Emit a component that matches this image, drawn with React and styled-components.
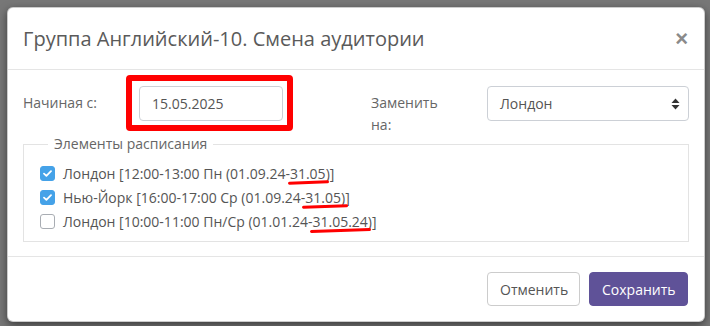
import React from "react";
import styled, { createGlobalStyle } from "styled-components";

const Global = createGlobalStyle`
  html, body { margin: 0; padding: 0; }
  body {
    background: #777777;
    font-family: "Open Sans", "Liberation Sans", sans-serif;
    font-size: 14px;
    color: #555;
    width: 710px;
    height: 326px;
    overflow: hidden;
  }
  * { box-sizing: border-box; }
`;

const Page = styled.div`
  padding: 7px 5px 0 7px;
`;

const Modal = styled.div`
  width: 698px;
  height: 315px;
  background: #fff;
  border: 1px solid rgba(0, 0, 0, 0.2);
  border-radius: 6px;
  box-shadow: 0 3px 9px rgba(0, 0, 0, 0.5);
  display: flex;
  flex-direction: column;
`;

const Header = styled.div`
  flex: none;
  display: flex;
  align-items: center;
  justify-content: space-between;
  height: 62px;
  padding: 0 15px;
  border-bottom: 1px solid #e5e5e5;
`;

const Title = styled.h4`
  margin: 0;
  font-size: 20px;
  font-weight: 400;
  color: #5a5a5a;
  line-height: 28px;
  padding-top: 1px;
`;

const Close = styled.button`
  border: 0;
  background: none;
  padding: 0;
  margin-right: 1px;
  font-family: "Liberation Sans", sans-serif;
  font-size: 22px;
  font-weight: 700;
  color: #8a8a8a;
  line-height: 1;
  cursor: pointer;
`;

const Body = styled.div`
  flex: 1;
  min-height: 0;
  padding: 16px 15px 0;
  border-bottom: 1px solid #e5e5e5;
`;

const FormRow = styled.div`
  display: grid;
  grid-template-columns: 86px 144px 28px 86px 202px;
  column-gap: 30px;
  align-items: start;
`;

const Label = styled.label`
  grid-column: ${(p) => p.$col};
  padding-top: 6px;
  line-height: 22px;
  color: #666;
  font-size: 14px;
`;

const Field = styled.div`
  grid-column: ${(p) => p.$col};
  position: relative;
`;

const Input = styled.input`
  display: block;
  width: 100%;
  height: 35px;
  padding: 6px 12px;
  font: inherit;
  font-size: 14px;
  color: #555;
  border: 1px solid #ccd0d6;
  border-radius: 4px;
  background: #fff;
  outline: none;
`;

const Highlight = styled.div`
  position: absolute;
  left: -13px;
  top: -11px;
  right: -10px;
  bottom: -10px;
  border: 6px solid #ff0000;
  border-radius: 4px;
  pointer-events: none;
`;

const Select = styled.div`
  height: 35px;
  display: flex;
  align-items: center;
  justify-content: space-between;
  padding: 0 8px 0 12px;
  border: 1px solid #ccd0d6;
  border-radius: 4px;
  color: #555;
  background: #fff;
`;

const Fieldset = styled.fieldset`
  margin: 0;
  padding: 9px 16px 8px;
  border: 1px solid #e3e3e3;
  min-width: 0;
`;

const Legend = styled.legend`
  padding: 0 6px;
  margin-left: 8px;
  font-size: 14px;
  color: #666;
  line-height: 16px;
`;

const Item = styled.label`
  display: flex;
  align-items: center;
  gap: 8px;
  height: 24px;
  color: #555;
  font-size: 14px;
  white-space: nowrap;
`;

const Box = styled.span`
  width: 15px;
  height: 15px;
  border-radius: 3px;
  flex: none;
  display: flex;
  align-items: center;
  justify-content: center;
  background: ${(p) => (p.$checked ? "#45a2e8" : "#fff")};
  border: 1px solid ${(p) => (p.$checked ? "#45a2e8" : "#a9adb3")};
`;

const Mark = styled.span`
  position: relative;
  &::after {
    content: "";
    position: absolute;
    left: ${(p) => p.$l}px;
    right: ${(p) => p.$r}px;
    top: calc(100% + ${(p) => p.$dy}px);
    height: 3px;
    border-radius: 2px;
    background: #ff0000;
    transform: rotate(${(p) => p.$rot}deg);
  }
`;

const Footer = styled.div`
  flex: none;
  display: flex;
  justify-content: flex-end;
  gap: 9px;
  padding: 15px;
`;

const Button = styled.button`
  height: 34px;
  padding: 0 12px;
  font-family: "Open Sans", "Liberation Sans", sans-serif;
  font-size: 14px;
  border-radius: 4px;
  cursor: pointer;
  border: 1px solid ${(p) => (p.$primary ? "#5f5298" : "#ccc")};
  background: ${(p) => (p.$primary ? "#5f5298" : "#fff")};
  color: ${(p) => (p.$primary ? "#fff" : "#555")};
  width: ${(p) => p.$w}px;
  margin-right: ${(p) => p.$mr || 0}px;
`;

const Check = () => (
  <svg width="9" height="7" viewBox="0 0 9 7">
    <path d="M1 3.6 L3.4 5.8 L8 1.2" fill="none" stroke="#fff" strokeWidth="1.8" strokeLinecap="round" strokeLinejoin="round" />
  </svg>
);

const Arrows = () => (
  <svg width="9" height="12" viewBox="0 0 9 12">
    <path d="M4.5 0.5 L8.5 5 H0.5 Z" fill="#333" />
    <path d="M4.5 11.5 L8.5 7 H0.5 Z" fill="#333" />
  </svg>
);

const rows = [
  { checked: true, pre: "Лондон [12:00-13:00 Пн (01.09.24-", mark: "31.05", post: ")]", m: { l: -2, r: -3, dy: -2, rot: -2 } },
  { checked: true, pre: "Нью-Йорк [16:00-17:00 Ср (01.09.24-", mark: "31.05", post: ")]", m: { l: -3, r: -7, dy: -2, rot: -2 } },
  { checked: false, pre: "Лондон [10:00-11:00 Пн/Ср (01.01.24-", mark: "31.05.24", post: ")]", m: { l: -2, r: -4, dy: -2, rot: -2 } },
];

export default function App() {
  return (
    <>
      <Global />
      <Page>
        <Modal>
          <Header>
            <Title>Группа Английский-10. Смена аудитории</Title>
            <Close aria-label="Закрыть">×</Close>
          </Header>
          <Body>
            <FormRow>
              <Label $col="1">Начиная с:</Label>
              <Field $col="2">
                <Input defaultValue="15.05.2025" />
                <Highlight />
              </Field>
              <Label $col="4">Заменить на:</Label>
              <Field $col="5">
                <Select>
                  <span>Лондон</span>
                  <Arrows />
                </Select>
              </Field>
            </FormRow>
            <Fieldset>
              <Legend>Элементы расписания</Legend>
              {rows.map((r, i) => (
                <Item key={i}>
                  <Box $checked={r.checked}>{r.checked && <Check />}</Box>
                  <span>
                    {r.pre}
                    <Mark $l={r.m.l} $r={r.m.r} $dy={r.m.dy} $rot={r.m.rot}>{r.mark}</Mark>
                    {r.post}
                  </span>
                </Item>
              ))}
            </Fieldset>
          </Body>
          <Footer>
            <Button $w={93}>Отменить</Button>
            <Button $primary $w={99} $mr={1}>Сохранить</Button>
          </Footer>
        </Modal>
      </Page>
    </>
  );
}
